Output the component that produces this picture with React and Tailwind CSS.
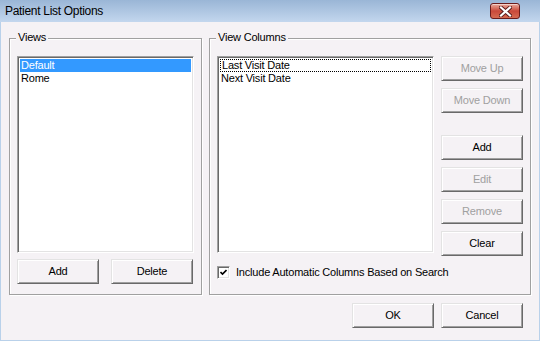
import { useState } from "react";

const font = "font-['Liberation_Sans',Arial,sans-serif]";

const sunken =
  "border border-t-[#a0a0a0] border-l-[#a0a0a0] border-r-white border-b-white shadow-[inset_1px_1px_0_#696969,inset_-1px_-1px_0_#e3e3e3]";

const Button = ({ children, disabled, className = "" }) => (
  <button
    disabled={disabled}
    className={`h-[25px] w-[82px] shrink-0 border border-t-[#e3e3e3] border-l-[#e3e3e3] border-r-[#696969] border-b-[#696969] bg-[#f5f2f5] font-['Liberation_Sans',Arial,sans-serif] text-[11px] font-normal tracking-[-0.2px] leading-[13px] shadow-[inset_1px_1px_0_#fff,inset_-1px_-1px_0_#a0a0a0] ${
      disabled ? "text-[#a0a0a0]" : "text-black"
    } ${className}`}
  >
    {children}
  </button>
);

const GroupBox = ({ title, className = "", children }) => (
  <div
    className={`flex h-[257px] flex-col border border-[#a0a0a0] shadow-[inset_1px_1px_0_#fff,1px_1px_0_#fff] ${className}`}
  >
    <span className="-mt-[8px] ml-[6px] h-[13px] self-start bg-[#f5f2f5] px-[2px] text-[11px] leading-[13px] tracking-[-0.2px]">
      {title}
    </span>
    {children}
  </div>
);

export default function App() {
  const [views] = useState(["Default", "Rome"]);
  const [columns] = useState(["Last Visit Date", "Next Visit Date"]);

  return (
    <div
      className={`flex h-[341px] w-[540px] flex-col overflow-hidden bg-[#b9d1ea] text-black ${font}`}
    >
      {/* Title bar */}
      <div className="flex h-[22px] shrink-0 items-center justify-between bg-gradient-to-b from-[#9ab6d6] to-[#c3d7ee] pl-[5px] pr-[20px]">
        <span className="text-[12px] leading-[14px] tracking-[-0.3px]">Patient List Options</span>
        <div className="flex h-[16px] w-[30px] items-center justify-center rounded-[3px] border border-[#6b1c1c] bg-gradient-to-b from-[#e9a99c] via-[#c9483a] to-[#d56a52] shadow-[inset_0_1px_0_rgba(255,255,255,0.5)]">
          <svg width="13" height="11" viewBox="0 0 13 11">
            <path
              d="M2 1.5 L11 9.5 M11 1.5 L2 9.5"
              stroke="#5a1a1a"
              strokeWidth="4"
              strokeLinecap="square"
            />
            <path
              d="M2 1.5 L11 9.5 M11 1.5 L2 9.5"
              stroke="#fff"
              strokeWidth="2.2"
              strokeLinecap="square"
            />
          </svg>
        </div>
      </div>

      {/* Client area */}
      <div className="mx-[1px] mb-[1px] flex flex-1 flex-col bg-[#f5f2f5] pl-[8px] pr-[16px] pt-[16px]">
        <div className="flex gap-[7px]">
          <GroupBox title="Views" className="w-[193px]">
            <div className="mt-[12px] px-[7px]">
              <div className={`h-[197px] w-[177px] bg-white p-[2px] ${sunken}`}>
                {views.map((v, i) => (
                  <div
                    key={v}
                    className={`h-[13px] pl-[1px] text-[11px] leading-[13px] tracking-[-0.2px] ${
                      i === 0 ? "bg-[#3399ff] text-white" : ""
                    }`}
                  >
                    {v}
                  </div>
                ))}
              </div>
              <div className="mt-[6px] flex justify-between pr-[1px]">
                <Button>Add</Button>
                <Button>Delete</Button>
              </div>
            </div>
          </GroupBox>

          <GroupBox title="View Columns" className="w-[322px]">
            <div className="mt-[12px] flex gap-[7px] px-[7px]">
              <div className={`h-[197px] w-[217px] bg-white p-[2px] ${sunken}`}>
                {columns.map((c, i) => (
                  <div
                    key={c}
                    className={`h-[13px] pl-[1px] text-[11px] leading-[11px] tracking-[-0.2px] ${
                      i === 0 ? "border border-dotted border-black pl-0" : "pt-[1px]"
                    }`}
                  >
                    {c}
                  </div>
                ))}
              </div>
              <div className="flex flex-col">
                <Button disabled>Move Up</Button>
                <Button disabled className="mt-[7px]">
                  Move Down
                </Button>
                <Button className="mt-[22px]">Add</Button>
                <Button disabled className="mt-[7px]">
                  Edit
                </Button>
                <Button disabled className="mt-[7px]">
                  Remove
                </Button>
                <Button className="mt-[7px]">Clear</Button>
              </div>
            </div>
            <label className="ml-[7px] mt-[10px] flex items-center gap-[6px] text-[11px] leading-[13px] tracking-[-0.2px]">
              <span className={`flex h-[13px] w-[13px] items-center justify-center bg-white ${sunken}`}>
                <svg width="7" height="7" viewBox="0 0 7 7">
                  <path d="M0.5 3 L2.5 5 L6.5 1" stroke="#000" strokeWidth="1.6" fill="none" />
                </svg>
              </span>
              Include Automatic Columns Based on Search
            </label>
          </GroupBox>
        </div>

        <div className="mt-[8px] flex justify-end gap-[7px]">
          <Button>OK</Button>
          <Button>Cancel</Button>
        </div>
      </div>
    </div>
  );
}
